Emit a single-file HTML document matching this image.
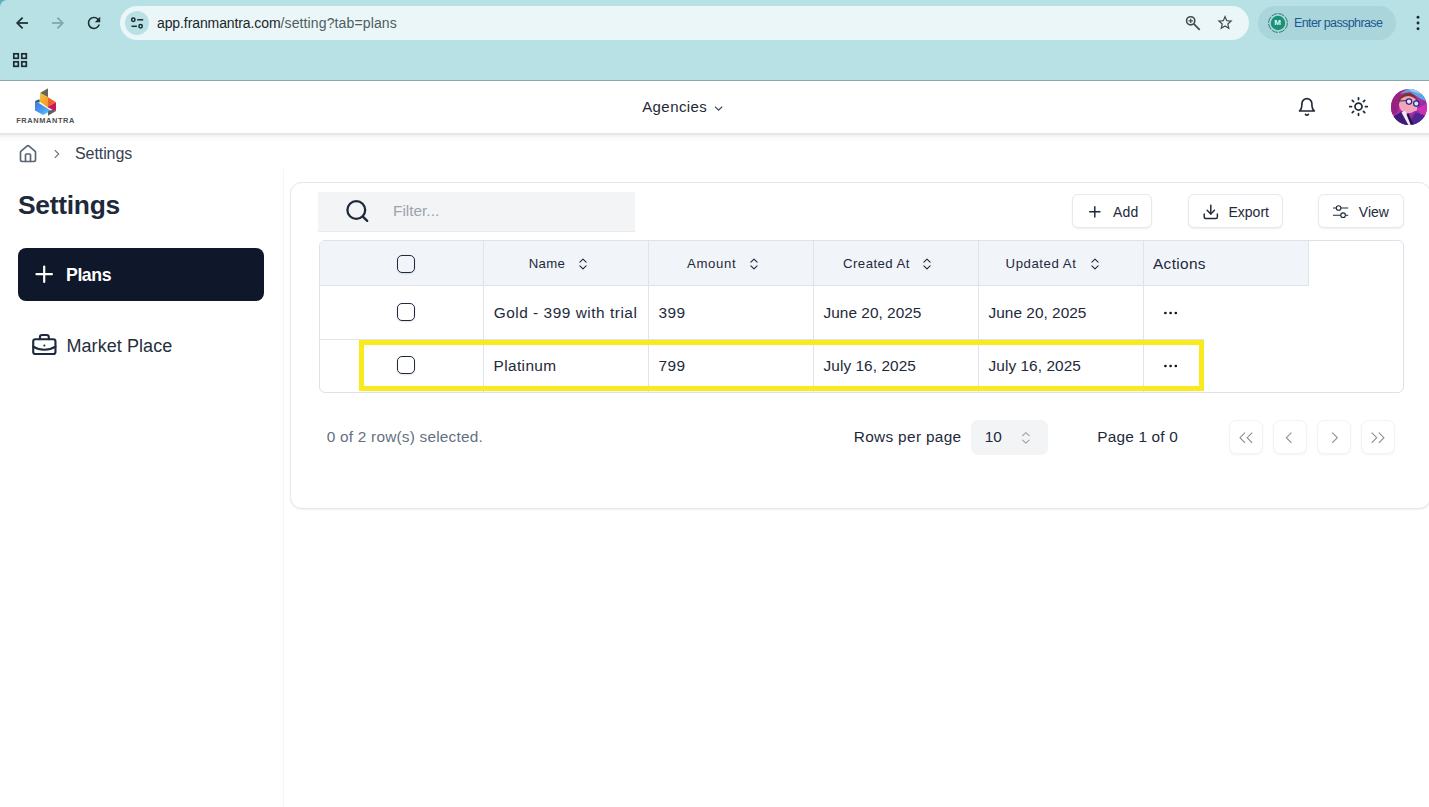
<!DOCTYPE html>
<html lang="en">
<head>
<meta charset="utf-8">
<title>Franmantra - Settings</title>
<style>
*{box-sizing:border-box;margin:0;padding:0}
html,body{width:1429px;height:807px;overflow:hidden;background:#fff}
body{font-family:"Liberation Sans",sans-serif;color:#1e293b;position:relative}
.abs{position:absolute}
.t{position:absolute;white-space:nowrap;line-height:1}
svg{position:absolute;overflow:visible}
/* browser chrome */
#chrome{left:0;top:0;width:1429px;height:80px;background:#b8e1e6}
#corner{left:0;top:0;width:7px;height:7px;background:#60b0bc}
#corner i{position:absolute;left:0;top:0;width:14px;height:14px;border-radius:7px;background:#b8e1e6}
#chromeline{left:0;top:80px;width:1429px;height:1px;background:#8ba7ab}
#omni{left:120px;top:6px;width:1129px;height:34px;border-radius:17px;background:#eaf6f8}
#site{left:125px;top:11px;width:24px;height:24px;border-radius:12px;background:#b8e1e6}
#prof{left:1258px;top:6px;width:138px;height:34px;border-radius:17px;background:#a9d5db}
/* app header */
#hdr{left:0;top:81px;width:1429px;height:52px;background:#fff}
#hdrsh{left:0;top:133px;width:1429px;height:8px;background:linear-gradient(#e3e3e3 0,#e7e7e7 25%,#f2f2f2 31%,#f6f6f6 50%,#fafafa 56%,#fcfcfc 80%,#fff 100%)}
#side{left:283px;top:169px;width:1px;height:638px;background:#f5f5f7}
#plans{left:18px;top:248px;width:246px;height:53px;border-radius:8px;background:#0f172a}
#card{left:290px;top:182px;width:1141px;height:327px;border:1px solid #e6e7ea;border-radius:12px;background:#fff;box-shadow:0 1px 2px rgba(0,0,0,.06)}
#filter{left:318px;top:192px;width:317px;height:40px;background:#f3f4f6;border-bottom:1px solid #e9ebee}
.btn{position:absolute;height:34px;top:194px;border:1px solid #e7e9ec;border-radius:6px;background:#fff;box-shadow:0 1px 2px rgba(0,0,0,.07)}
#tbl{left:319px;top:240px;width:1085px;height:153px;border:1px solid #dde2ea;border-radius:6px;background:#fff;overflow:hidden}
#thead{left:320px;top:241px;width:988px;height:44px;background:#f1f5f9;border-top-left-radius:5px}
.vl{position:absolute;width:1px;background:#dfe4eb;top:241px;height:151px}
.hl{position:absolute;height:1px;background:#dfe4eb;left:319px}
.cb{position:absolute;width:18px;height:18px;border:1px solid #1e293b;border-radius:5px;left:397px;box-shadow:0 1px 2px rgba(0,0,0,.12)}
#hi{left:359px;top:340px;width:845px;height:51px;border:5px solid #f8ea1c}
#sel{left:971px;top:420px;width:77px;height:35px;border-radius:7px;background:#f3f4f6}
.pb{position:absolute;top:420px;width:34px;height:34px;border:1px solid #f2f3f5;border-radius:7px;background:#fff;box-shadow:0 1px 2px rgba(0,0,0,.05)}
</style>
</head>
<body>
<!-- ===== Browser chrome ===== -->
<div id="chrome" class="abs"></div>
<div id="corner" class="abs"><i></i></div>
<div id="chromeline" class="abs"></div>
<div id="omni" class="abs"></div>
<div id="site" class="abs"></div>
<div id="prof" class="abs"></div>
<!-- back / forward / reload -->
<svg style="left:0;top:0" width="160" height="80" viewBox="0 0 160 80" fill="none">
  <g stroke="#1c2b2e" stroke-width="1.7" stroke-linecap="butt" stroke-linejoin="miter">
    <path d="M28 23H18.2"/><path d="M22.6 17.6L17.2 23l5.4 5.4"/>
  </g>
  <g stroke="#7fa5ab" stroke-width="1.7" stroke-linecap="butt" stroke-linejoin="miter">
    <path d="M52 23h9.8"/><path d="M57.4 17.6L62.8 23l-5.4 5.4"/>
  </g>
  <!-- reload -->
  <g transform="translate(84.7 13.7) scale(0.775)">
    <path fill="#1c2b2e" d="M17.65 6.35A7.958 7.958 0 0 0 12 4c-4.42 0-7.99 3.58-7.99 8s3.57 8 7.99 8c3.73 0 6.84-2.55 7.73-6h-2.08A5.99 5.99 0 0 1 12 18c-3.31 0-6-2.69-6-6s2.69-6 6-6c1.66 0 3.14.69 4.22 1.78L13 11h7V4l-2.35 2.35z"/>
  </g>
  <!-- tune / site info -->
  <g stroke="#1c2b2e" stroke-width="1.5" fill="none">
    <circle cx="133.3" cy="19.8" r="1.7"/><path d="M137.2 19.8h6"/>
    <circle cx="140.6" cy="26.3" r="1.7"/><path d="M131.5 26.3h5.4"/>
  </g>
  <!-- apps grid -->
  <g stroke="#1c2b2e" stroke-width="1.7" fill="none">
    <rect x="13.8" y="53.8" width="4.5" height="4.5"/><rect x="21.8" y="53.8" width="4.5" height="4.5"/>
    <rect x="13.8" y="61.8" width="4.5" height="4.5"/><rect x="21.8" y="61.8" width="4.5" height="4.5"/>
  </g>
</svg>
<div class="t" style="left:157px;top:16px;font-size:14px;letter-spacing:-.1px;color:#1c2628">app.franmantra.com<span style="color:#4f5d60;letter-spacing:.13px">/setting?tab=plans</span></div>
<!-- zoom, star, profile, menu -->
<svg style="left:1170px;top:0" width="259" height="50" viewBox="1170 0 259 50" fill="none">
  <g stroke="#414c4e" stroke-width="1.6" fill="none">
    <circle cx="1190.7" cy="20.8" r="4.1"/><path d="M1193.8 23.9l5.9 5.9" stroke-width="1.8"/>
    <path d="M1188.6 20.8h4.2M1190.7 18.7v4.2" stroke-width="1.2"/>
  </g>
  <path transform="translate(1215.9 13.6) scale(0.76)" fill="#414c4e" d="M22 9.24l-7.19-.62L12 2 9.19 8.63 2 9.24l5.46 4.73L5.82 21 12 17.27 18.18 21l-1.63-7.03L22 9.24zM12 15.4l-3.76 2.27 1-4.28-3.32-2.88 4.38-.38L12 6.1l1.71 4.04 4.38.38-3.32 2.88 1 4.28L12 15.4z"/>
  <circle cx="1278" cy="23" r="9.4" stroke="#2c7f78" stroke-width="1" stroke-dasharray="6.2 1.2" fill="none"/>
  <circle cx="1278" cy="23" r="7.2" fill="#1a9079"/>
  <g fill="#1c2b2e"><circle cx="1418" cy="17.2" r="1.45"/><circle cx="1418" cy="23" r="1.45"/><circle cx="1418" cy="28.8" r="1.45"/></g>
</svg>
<div class="t" style="left:1274.2px;top:19.2px;font-size:8px;font-weight:700;color:#e8fbf6">M</div>
<div class="t" style="left:1294px;top:16.5px;font-size:12.5px;letter-spacing:-.6px;color:#1d5791">Enter passphrase</div>

<!-- ===== App header ===== -->
<div id="hdr" class="abs"></div><div id="hdrsh" class="abs"></div>
<!-- logo -->
<svg style="left:30px;top:84px" width="32" height="36" viewBox="30 84 32 36">
  <defs>
    <linearGradient id="gy" x1="0" y1="0" x2="1" y2="1"><stop offset="0" stop-color="#f7c433"/><stop offset="1" stop-color="#f6922a"/></linearGradient>
    <linearGradient id="gb" x1="0" y1="0" x2="1" y2="1"><stop offset="0" stop-color="#3a78de"/><stop offset=".55" stop-color="#4a9cf0"/><stop offset="1" stop-color="#66d3f2"/></linearGradient>
  </defs>
  <polygon points="48,88.2 48,97.2 40,92.9" fill="#6a6658"/>
  <polygon points="40,92.9 48,97.2 48,107.6 40,102" fill="url(#gy)"/>
  <polygon points="48,97.2 56,102.2 48,106.6" fill="#f0602a"/>
  <polygon points="56,102.2 56,111 52.5,109.8 48,107.4 48,106.6" fill="#c71a5e"/>
  <polygon points="35,101 39.6,99.2 39.6,102.4 36.2,102.6" fill="#31566c"/>
  <polygon points="35,101.2 39.6,103.5 51.2,110.8 43,115 35,110.4" fill="url(#gb)"/>
  <polygon points="48,111.3 52.8,109.6 56,111 48,115.7" fill="#5d6163"/>
</svg>
<div class="t" style="left:16.2px;top:117.4px;font-size:7.400px;font-weight:700;letter-spacing:.62px;color:#505052">FRANMANTRA</div>
<div class="t" style="left:642.200px;top:99.200px;font-size:15px;letter-spacing:.42px;color:#1f2937">Agencies</div>
<svg style="left:712px;top:103px" width="13" height="11" viewBox="712 103 13 11" fill="none"><path d="M715 106.6l3.6 3.5 3.6-3.5" stroke="#374151" stroke-width="1.15"/></svg>
<!-- bell -->
<svg style="left:1297px;top:96.8px" width="19.8" height="19.8" viewBox="0 0 24 24" fill="none" stroke="#1f2937" stroke-width="2" stroke-linecap="round" stroke-linejoin="round"><path d="M6 8a6 6 0 0 1 12 0c0 7 3 9 3 9H3s3-2 3-9"/><path d="M10.3 21a1.94 1.94 0 0 0 3.4 0"/></svg>
<!-- sun -->
<svg style="left:1347.9px;top:95.9px" width="21" height="21" viewBox="0 0 24 24" fill="none" stroke="#1f2937" stroke-width="2" stroke-linecap="round" stroke-linejoin="round"><circle cx="12" cy="12" r="4"/><path d="M12 2v2M12 20v2M4.93 4.93l1.41 1.41M17.66 17.66l1.41 1.41M2 12h2M20 12h2M6.34 17.66l-1.41 1.41M19.07 4.93l-1.41 1.41"/></svg>
<!-- avatar -->
<svg style="left:1391px;top:89px" width="36" height="36" viewBox="0 0 36 36">
  <defs><clipPath id="av"><circle cx="18" cy="18" r="18"/></clipPath>
  <linearGradient id="avbg" x1="0" y1="0" x2="1" y2="1"><stop offset="0" stop-color="#b0268e"/><stop offset=".5" stop-color="#b32ea8"/><stop offset="1" stop-color="#5a2a9a"/></linearGradient></defs>
  <g clip-path="url(#av)">
    <rect width="36" height="36" fill="url(#avbg)"/>
    <polygon points="0,4 10,0 9,14 6,24 0,26" fill="#962382"/>
    <polygon points="9,5 20,-2 40,-2 40,14 30,10 19,3" fill="#5aa7e6"/>
    <polygon points="16,-1 40,-1 40,9 30,5 20,2" fill="#a9cbe6"/>
    <polygon points="26,20 40,12 40,28 30,26" fill="#d22eb2"/>
    <ellipse cx="17" cy="13.500" rx="9.600" ry="9.600" fill="#7d3329"/>
    <ellipse cx="17.200" cy="15.600" rx="9.300" ry="8.700" fill="#f3a5bc"/>
    <path d="M20 23l6-1.500 .5-5z" fill="#f3a5bc"/>
    <path d="M-2 36l5-9 8-4.500 7 8.500 4 6z" fill="#3b1c78"/>
    <path d="M22 38l-1.500-8 4-6.500 10 3 4 12z" fill="#4f2596"/>
    <path d="M10.500 23.500l3.500-1.800 8.500 14.500h-5z" fill="#f6eaf6"/>
    <path d="M15.500 25.500l2-1 5.500 12h-3z" fill="#23124a"/>
    <circle cx="18" cy="12.600" r="2.700" fill="#f7dcea" stroke="#2b2588" stroke-width="1.200"/>
    <circle cx="25.300" cy="14.600" r="2.700" fill="#cfe6fa" stroke="#2b2588" stroke-width="1.200"/>
    <path d="M8.300 12.100l6.800-.5" stroke="#3a2270" stroke-width="1"/>
  </g>
</svg>

<!-- ===== Sidebar ===== -->
<div id="side" class="abs"></div>
<!-- home -->
<svg style="left:17.800px;top:143.900px" width="20" height="20" viewBox="0 0 24 24" fill="none" stroke-linecap="round" stroke-linejoin="round" stroke="#5b6573" stroke-width="2"><path d="M15 21v-8a1 1 0 0 0-1-1h-4a1 1 0 0 0-1 1v8"/><path d="M3 10a2 2 0 0 1 .709-1.528l7-5.999a2 2 0 0 1 2.582 0l7 5.999A2 2 0 0 1 21 10v9a2 2 0 0 1-2 2H5a2 2 0 0 1-2-2z"/></svg>
<svg style="left:52px;top:148px" width="10" height="12" viewBox="52 148 10 12" fill="none"><path d="M54.800 150.100l3.900 3.900-3.900 3.900" stroke="#6b7280" stroke-width="1.200"/></svg>
<div class="t" style="left:75px;top:146.200px;font-size:16px;letter-spacing:-.08px;color:#374151">Settings</div>
<div class="t" style="left:18px;top:192px;font-size:26.400px;font-weight:700;letter-spacing:-.28px;color:#1e293b">Settings</div>
<div id="plans" class="abs"></div>
<svg style="left:31.100px;top:260.900px" width="26.400" height="26.400" viewBox="0 0 24 24" fill="none" stroke-linecap="round" stroke-linejoin="round" stroke="#fff" stroke-width="2"><path d="M5 12h14"/><path d="M12 5v14"/></svg>
<div class="t" style="left:66px;top:266.500px;font-size:17.700px;font-weight:700;letter-spacing:-.42px;color:#fff">Plans</div>
<!-- briefcase -->
<svg style="left:30.800px;top:332.600px" width="26.700" height="25.200" preserveAspectRatio="none" viewBox="0 0 24 24" fill="none" stroke-linecap="round" stroke-linejoin="round" stroke="#1e293b" stroke-width="1.900"><path d="M12 12h.01"/><path d="M16 6V4a2 2 0 0 0-2-2h-4a2 2 0 0 0-2 2v2"/><path d="M22 13a18.150 18.150 0 0 1-20 0"/><rect width="20" height="14" x="2" y="6" rx="2"/></svg>
<div class="t" style="left:66.500px;top:336.800px;font-size:18px;letter-spacing:.06px;color:#252f3d">Market Place</div>

<!-- ===== Main card ===== -->
<div id="card" class="abs"></div>
<div id="filter" class="abs"></div>
<svg style="left:340px;top:195px" width="34" height="32" viewBox="340 195 34 32" fill="none" stroke="#1e293b" stroke-width="2.300" stroke-linecap="round"><circle cx="356.300" cy="210" r="8.900"/><path d="M362.900 216.600l4.300 4.300"/></svg>
<div class="t" style="left:393px;top:203.200px;font-size:15.400px;letter-spacing:0px;color:#9ca3af">Filter...</div>
<div class="btn" style="left:1072px;width:80px"></div>
<div class="btn" style="left:1188px;width:95px"></div>
<div class="btn" style="left:1318px;width:86px"></div>
<svg style="left:1085.800px;top:202.800px" width="17.600" height="17.600" viewBox="0 0 24 24" fill="none" stroke-linecap="round" stroke-linejoin="round" stroke="#1e293b" stroke-width="2"><path d="M5 12h14"/><path d="M12 5v14"/></svg>
<svg style="left:1201.700px;top:202.900px" width="17.600" height="17.600" viewBox="0 0 24 24" fill="none" stroke-linecap="round" stroke-linejoin="round" stroke="#1e293b" stroke-width="2"><path d="M21 15v4a2 2 0 0 1-2 2H5a2 2 0 0 1-2-2v-4"/><path d="M7 10l5 5 5-5"/><path d="M12 15V3"/></svg>
<svg style="left:1330px;top:202px" width="22" height="20" viewBox="1330 202 22 20" fill="none" stroke="#1e293b" stroke-width="1.100"><path d="M1333 208h3.300M1341 208h7.200"/><circle cx="1338.600" cy="208" r="2.300"/><path d="M1333 215.200h7.800M1345.500 215.200h2.700"/><circle cx="1343.100" cy="215.200" r="2.300"/></svg>
<div class="t" style="left:1113px;top:204.700px;font-size:14px;letter-spacing:.15px;color:#1e293b">Add</div>
<div class="t" style="left:1228.500px;top:204.500px;font-size:14px;color:#1e293b">Export</div>
<div class="t" style="left:1358.800px;top:204.500px;font-size:14px;color:#1e293b">View</div>

<div id="tbl" class="abs"></div>
<div id="thead" class="abs"></div>
<div class="hl" style="top:285px;width:990px"></div>
<div class="hl" style="top:339px;width:885px"></div>
<div class="vl" style="left:483px"></div>
<div class="vl" style="left:648px"></div>
<div class="vl" style="left:813px"></div>
<div class="vl" style="left:978px"></div>
<div class="vl" style="left:1143px"></div>
<div class="vl" style="left:1308px;height:44px"></div>

<div class="cb" style="top:255px"></div>
<div class="cb" style="top:303px;background:#fff"></div>
<div class="cb" style="top:356px;background:#fff"></div>

<div class="t" style="left:528.700px;top:257px;font-size:13.200px;letter-spacing:.33px;color:#1e293b">Name</div>
<div class="t" style="left:687px;top:257px;font-size:13.200px;letter-spacing:.66px;color:#1e293b">Amount</div>
<div class="t" style="left:843px;top:257px;font-size:13.200px;letter-spacing:.46px;color:#1e293b">Created At</div>
<div class="t" style="left:1005.600px;top:257px;font-size:13.200px;letter-spacing:.56px;color:#1e293b">Updated At</div>
<div class="t" style="left:1153px;top:256.100px;font-size:15.400px;letter-spacing:.34px;color:#1e293b">Actions</div>
<svg style="left:577.6px;top:257px" width="10" height="14" viewBox="0 0 10 14" fill="none" stroke="#1e293b" stroke-width="1.1" stroke-linecap="round" stroke-linejoin="round"><path d="M1.900 5.200L5 2.100l3.100 3.100"/><path d="M1.900 8.800L5 11.900l3.100-3.100"/></svg><svg style="left:748.8px;top:257px" width="10" height="14" viewBox="0 0 10 14" fill="none" stroke="#1e293b" stroke-width="1.1" stroke-linecap="round" stroke-linejoin="round"><path d="M1.900 5.200L5 2.100l3.100 3.100"/><path d="M1.900 8.800L5 11.900l3.100-3.100"/></svg><svg style="left:921.8px;top:257px" width="10" height="14" viewBox="0 0 10 14" fill="none" stroke="#1e293b" stroke-width="1.1" stroke-linecap="round" stroke-linejoin="round"><path d="M1.900 5.200L5 2.100l3.100 3.100"/><path d="M1.900 8.800L5 11.900l3.100-3.100"/></svg><svg style="left:1089.5px;top:257px" width="10" height="14" viewBox="0 0 10 14" fill="none" stroke="#1e293b" stroke-width="1.1" stroke-linecap="round" stroke-linejoin="round"><path d="M1.900 5.200L5 2.100l3.100 3.100"/><path d="M1.900 8.800L5 11.900l3.100-3.100"/></svg>

<div class="t" style="left:493.700px;top:305.200px;font-size:15.400px;letter-spacing:.53px;color:#1e293b">Gold - 399 with trial</div>
<div class="t" style="left:658.400px;top:305.200px;font-size:15.400px;letter-spacing:.45px;color:#1e293b">399</div>
<div class="t" style="left:823.500px;top:305.200px;font-size:15.400px;letter-spacing:.03px;color:#1e293b">June 20, 2025</div>
<div class="t" style="left:988.500px;top:305.200px;font-size:15.400px;letter-spacing:.03px;color:#1e293b">June 20, 2025</div>
<svg style="left:1160px;top:308.5px" width="22" height="8" viewBox="0 0 22 8"><g fill="#111827"><circle cx="5.400" cy="4" r="1.350"/><circle cx="10.600" cy="4" r="1.350"/><circle cx="15.800" cy="4" r="1.350"/></g></svg>

<div class="t" style="left:493.500px;top:358.200px;font-size:15.400px;letter-spacing:.39px;color:#1e293b">Platinum</div>
<div class="t" style="left:658.400px;top:358.200px;font-size:15.400px;letter-spacing:.45px;color:#1e293b">799</div>
<div class="t" style="left:823.500px;top:358.200px;font-size:15.400px;letter-spacing:.07px;color:#1e293b">July 16, 2025</div>
<div class="t" style="left:988.500px;top:358.200px;font-size:15.400px;letter-spacing:.07px;color:#1e293b">July 16, 2025</div>
<svg style="left:1160px;top:361.5px" width="22" height="8" viewBox="0 0 22 8"><g fill="#111827"><circle cx="5.400" cy="4" r="1.350"/><circle cx="10.600" cy="4" r="1.350"/><circle cx="15.800" cy="4" r="1.350"/></g></svg>

<div id="hi" class="abs"></div>

<!-- footer -->
<div class="t" style="left:326.800px;top:429.100px;font-size:15.400px;letter-spacing:.21px;color:#64707f">0 of 2 row(s) selected.</div>
<div class="t" style="left:853.700px;top:429.400px;font-size:15.400px;letter-spacing:.33px;color:#1e293b">Rows per page</div>
<div id="sel" class="abs"></div>
<div class="t" style="left:984.700px;top:429.400px;font-size:15.400px;color:#1e293b">10</div>
<svg style="left:1020px;top:430px" width="12" height="16" viewBox="0 0 12 16" fill="none" stroke="#9aa1ab" stroke-width="1.100" stroke-linecap="round" stroke-linejoin="round"><path d="M2.600 5.700L5.900 2.600l3.300 3.100"/><path d="M2.600 10.100l3.300 3.100 3.300-3.100"/></svg>
<div class="t" style="left:1097.300px;top:429.400px;font-size:15.400px;letter-spacing:.18px;color:#1e293b">Page 1 of 0</div>
<div class="pb" style="left:1229px"></div>
<div class="pb" style="left:1273px"></div>
<div class="pb" style="left:1317px"></div>
<div class="pb" style="left:1361px"></div>
<svg style="left:1229px;top:420px" width="170" height="36" viewBox="1229 420 170 36" fill="none" stroke="#8b8e94" stroke-width="1.100" stroke-linejoin="miter">
  <path d="M1245 432.600l-5 5.100 5 5.100M1252.200 432.600l-5 5.100 5 5.100"/>
  <path d="M1291.400 432.600l-5 5.100 5 5.100"/>
  <path d="M1332.300 432.600l5 5.100-5 5.100"/>
  <path d="M1371.700 432.600l5 5.100-5 5.100M1378.900 432.600l5 5.100-5 5.100"/>
</svg>
</body>
</html>
